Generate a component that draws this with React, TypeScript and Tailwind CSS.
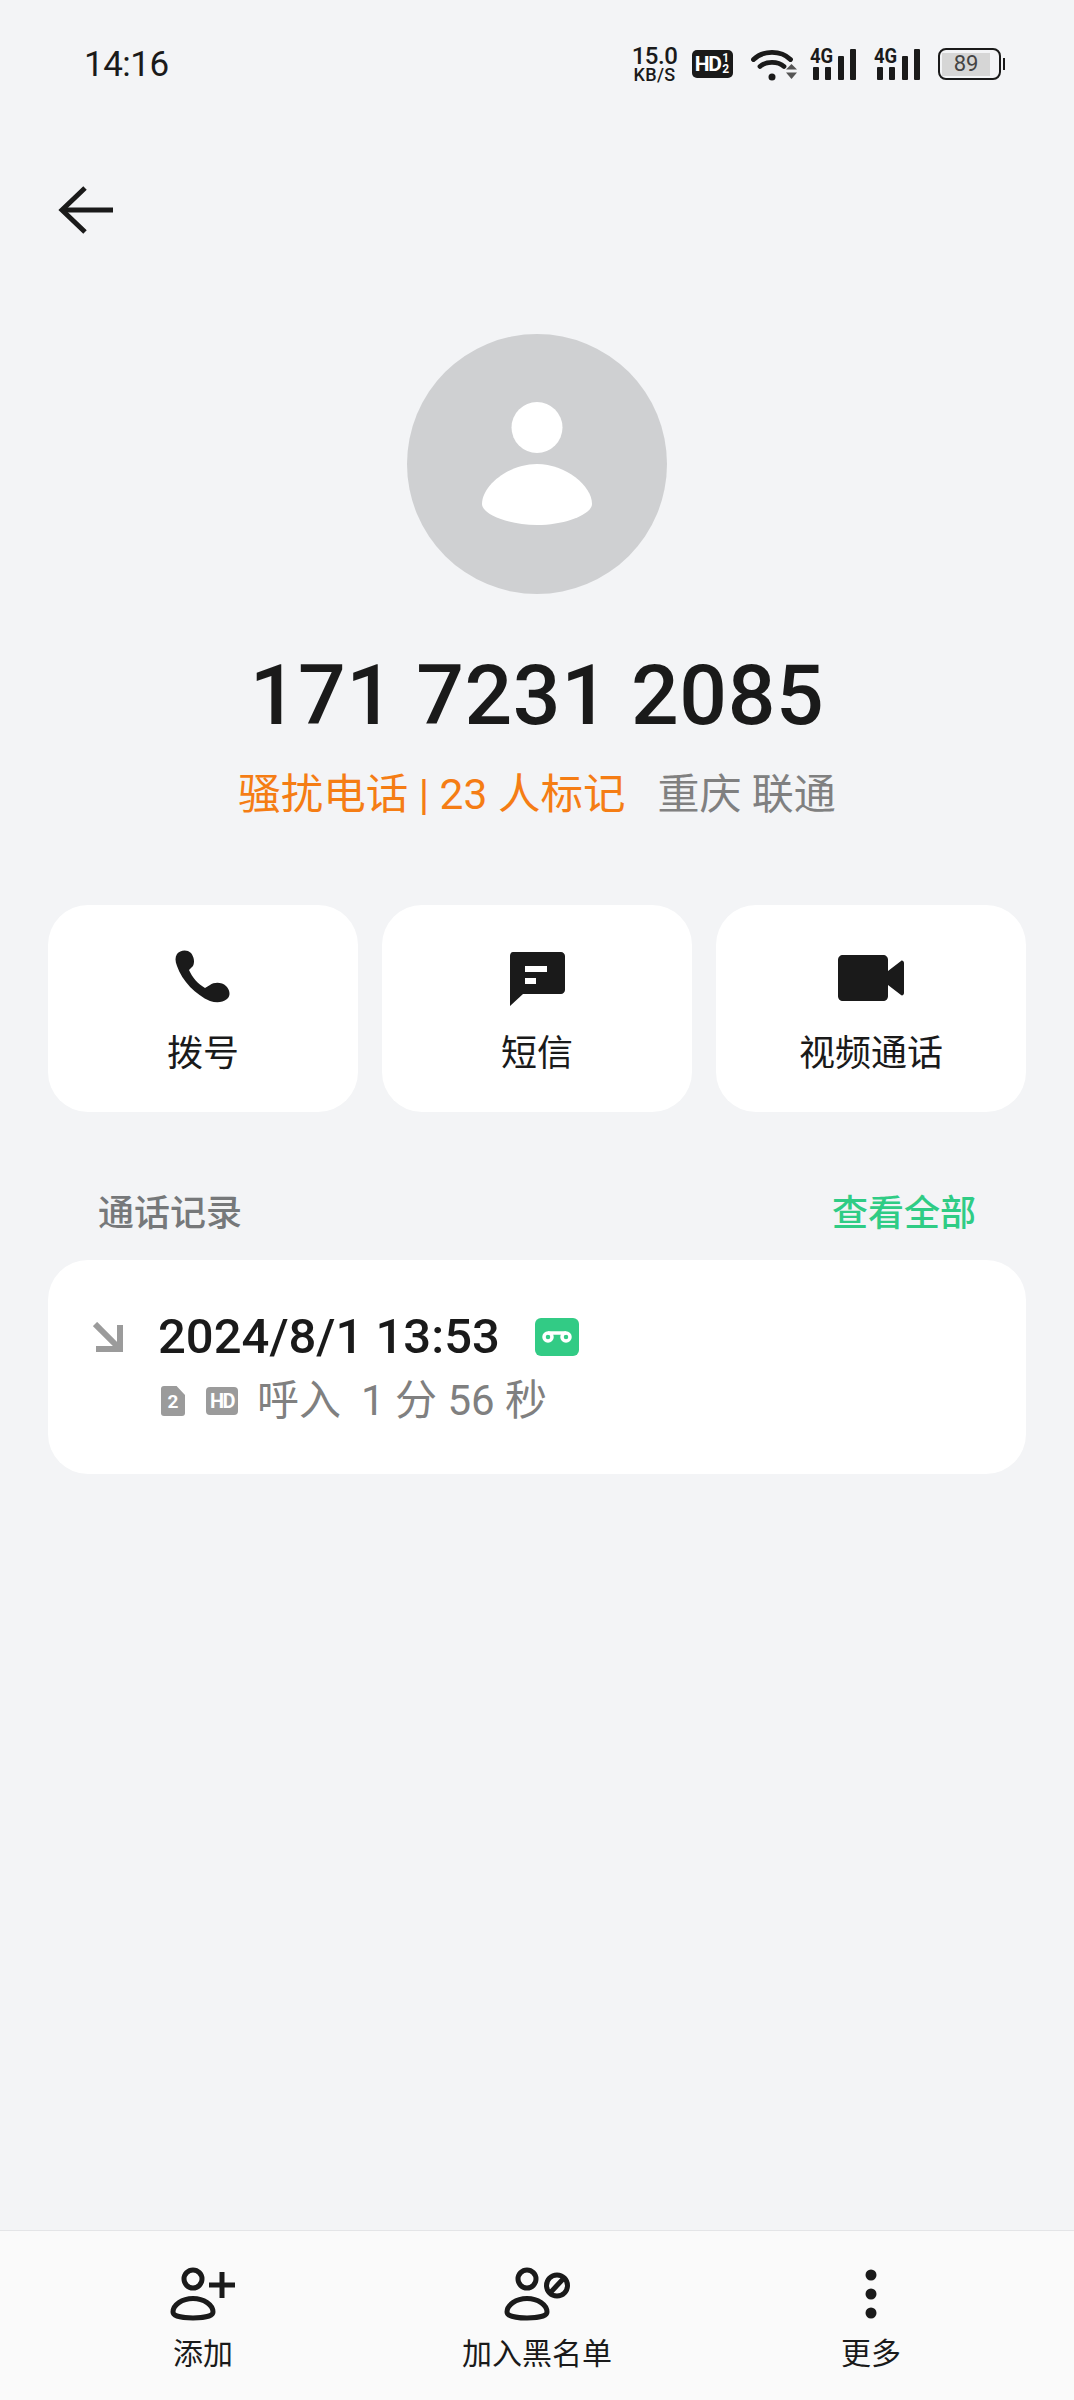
import type { ReactNode } from 'react'

const CJK = "font-['Roboto','Noto_Sans_CJK_SC',sans-serif]"

function SignalBars() {
  return (
    <div className="relative h-[32px] w-[47px]">
      <span className="absolute left-0 top-[-2px] origin-top-left scale-x-[0.88] text-[21px] font-bold leading-[20px] text-[#1a1a1a]">4G</span>
      <svg width="47" height="32" viewBox="0 0 47 32" fill="#1a1a1a">
        <rect x="3" y="19" width="6" height="13" rx="1" />
        <rect x="15" y="19" width="6" height="13" rx="1" />
        <rect x="28" y="8" width="6" height="24" rx="1" />
        <rect x="40" y="1" width="6" height="31" rx="1" />
      </svg>
    </div>
  )
}

function StatusBar() {
  return (
    <div className="flex h-[128px] items-center justify-between pl-[84px] pr-[69px] text-[#1a1a1a]">
      <span className="text-[35px] leading-none tracking-[-0.5px]">14:16</span>
      <div className="flex items-center">
        <div className="flex w-[46px] flex-col items-center">
          <span className="text-[24px] font-medium leading-[21px] tracking-[-0.5px]">15.0</span>
          <span className="text-[18px] font-medium leading-[15px] tracking-[0.3px]">KB/S</span>
        </div>
        <div className="ml-[14px] flex h-[28px] w-[41px] items-center justify-center rounded-[5px] bg-[#1a1a1a] text-white">
          <span className="text-[21px] font-bold leading-none tracking-[-1.5px]">HD</span>
          <div className="ml-[2px] flex flex-col items-center text-[12px] font-bold leading-[11px]">
            <span>1</span>
            <span>2</span>
          </div>
        </div>
        <svg className="ml-[18px]" width="46" height="33" viewBox="0 0 46 33" fill="none">
          <path d="M2.500 11.500C12 2 30 2 39.500 11.500" stroke="#1a1a1a" strokeWidth="4.800" strokeLinecap="round" />
          <path d="M9 18.500C15 13 27 13 33 18.500" stroke="#1a1a1a" strokeWidth="4.800" strokeLinecap="round" />
          <circle cx="21" cy="29" r="3.500" fill="#1a1a1a" />
          <path d="M35 21.500H46L40.500 16Z" fill="#555" />
          <path d="M35 24.500H46L40.500 31Z" fill="#555" />
        </svg>
        <div className="ml-[13px]"><SignalBars /></div>
        <div className="ml-[17px]"><SignalBars /></div>
        <div className="ml-[17px] flex items-center">
          <div className="flex h-[32px] w-[63px] items-center rounded-[8px] border-[2.5px] border-[#1a1a1a] p-[2.5px]">
            <div className="flex h-full w-[48px] items-center justify-center bg-[#d6d6d6]">
              <span className="text-[22px] leading-none text-[#444]">89</span>
            </div>
          </div>
          <div className="ml-[2px] h-[12px] w-[2.5px] bg-[#1a1a1a]" />
        </div>
      </div>
    </div>
  )
}

function ActionCard({ icon, label }: { icon: ReactNode, label: string }) {
  return (
    <div className="flex h-[207px] flex-1 flex-col items-center rounded-[40px] bg-white">
      <div className="mt-[44px] flex h-[58px] items-center justify-center">{icon}</div>
      <span className="mt-[20px] text-[36px] leading-[54px] text-[#1a1a1a]">{label}</span>
    </div>
  )
}

function BottomItem({ icon, label }: { icon: ReactNode, label: string }) {
  return (
    <div className="flex w-[334px] flex-col items-center">
      <div className="flex h-[56px] items-center justify-center">{icon}</div>
      <span className="mt-[9px] text-[30px] leading-[46px] text-[#1a1a1a]">{label}</span>
    </div>
  )
}

function PersonOutline() {
  return (
    <>
      <circle cx="23" cy="13" r="9" />
      <path d="M23 32.500C12 32.500 3 39 3 46C3 50 12 52 23 52C34 52 43 50 43 46C43 39 34 32.500 23 32.500Z" />
    </>
  )
}

export default function App() {
  return (
    <div className={`flex h-[2400px] w-[1074px] flex-col overflow-hidden bg-[#f3f4f6] ${CJK}`}>
      <StatusBar />

      <div className="pl-[58px] pt-[58px]">
        <svg width="55" height="48" viewBox="0 0 55 48" fill="none" stroke="#1a1a1a" strokeWidth="5">
          <path d="M55 24H5" />
          <path d="M27 2L4 24L27 46" />
        </svg>
      </div>

      <div className="mt-[100px] flex flex-col items-center">
        <div className="flex h-[260px] w-[260px] items-center justify-center rounded-full bg-[#cfd0d2]">
          <svg width="110" height="124" viewBox="0 0 110 124" fill="white">
            <circle cx="55" cy="25.500" r="25.500" />
            <path d="M55 62C26 62 0 84 0 102C0 112 26 123 55 123C84 123 110 112 110 102C110 84 84 62 55 62Z" />
          </svg>
        </div>
        <h1 className="mt-[52px] text-[84px] font-medium leading-[100px] tracking-[0.6px] text-[#1a1a1a]">171 7231 2085</h1>
        <div className="mt-[19px] flex items-center text-[42.5px] leading-[60px]">
          <span className="text-[#f57d14]">骚扰电话 | 23 人标记</span>
          <span className="ml-[32px] text-[42px] text-[#808080]">重庆 联通</span>
        </div>
      </div>

      <div className="mt-[80px] flex gap-[24px] px-[48px]">
        <ActionCard
          label="拨号"
          icon={
            <svg width="58" height="58" viewBox="0 0 58 58" fill="#1a1a1a">
              <path d="M3 5C6 1 13 0 17 4C20 8 21 13 19 17L15 21C18 28 24 35 31 39L36 36C40 33 48 33 52 37C56 41 57 47 53 50C48 54 42 54 36 52C22 46 8 32 3 17C1 12 1 8 3 5Z" />
            </svg>
          }
        />
        <ActionCard
          label="短信"
          icon={
            <svg className="mt-[2px]" width="56" height="54" viewBox="0 0 56 54" fill="#1a1a1a">
              <path fillRule="evenodd" d="M4 0H52C54 0 56 2 56 4V38C56 40 54 42 52 42H14L1 54V4C1 2 2 0 4 0ZM16 14V20H38V14ZM16 26V32H27V26Z" />
            </svg>
          }
        />
        <ActionCard
          label="视频通话"
          icon={
            <svg width="66" height="46" viewBox="0 0 66 46" fill="#1a1a1a">
              <path d="M5 0H45C48 0 50 2 50 5V41C50 44 48 46 45 46H5C2 46 0 44 0 41V5C0 2 2 0 5 0Z" />
              <path d="M50 16L63 6C64 5 66 6 66 8V38C66 40 64 41 63 40L50 30Z" />
            </svg>
          }
        />
      </div>

      <div className="mt-[75px] flex items-center justify-between px-[98px] text-[36px] font-medium leading-[54px]">
        <span className="text-[#76787a]">通话记录</span>
        <span className="text-[#2fcc85]">查看全部</span>
      </div>

      <div className="mx-[48px] mt-[19px] flex h-[214px] items-start rounded-[40px] bg-white pl-[45px] pt-[47px]">
        <svg className="mt-[15px]" width="30" height="30" viewBox="0 0 30 30" fill="none" stroke="#9b9b9b" strokeWidth="6">
          <path d="M2 2L26 26" />
          <path d="M3 27H27V3" />
        </svg>
        <div className="ml-[35px] flex flex-col">
          <div className="flex h-[60px] items-center">
            <span className="text-[49px] font-medium leading-[60px] text-[#1a1a1a]">2024/8/1 13:53</span>
            <div className="ml-[35px] flex h-[38px] w-[44px] items-center justify-center rounded-[6px] bg-[#32cb85]">
              <svg width="30" height="12" viewBox="0 0 30 12" fill="none" stroke="white" strokeWidth="3.500">
                <circle cx="6" cy="6" r="4" />
                <circle cx="24" cy="6" r="4" />
                <path d="M6 2H24" />
              </svg>
            </div>
          </div>
          <div className="mt-[4px] flex items-center">
            <div className="ml-[3px] flex h-[30px] w-[24px] items-center justify-center rounded-[3px] bg-[#9b9b9b] [clip-path:polygon(0_0,65%_0,100%_30%,100%_100%,0_100%)]">
              <span className="text-[19px] font-bold leading-none text-white">2</span>
            </div>
            <div className="ml-[21px] flex h-[28px] w-[32px] items-center justify-center rounded-[4px] bg-[#9b9b9b]">
              <span className="text-[20px] font-bold leading-none tracking-[-1.5px] text-white">HD</span>
            </div>
            <span className="ml-[19px] text-[42px] leading-[60px] text-[#808080]">呼入</span>
            <span className="ml-[20px] text-[42px] leading-[60px] text-[#808080]">1 分 56 秒</span>
          </div>
        </div>
      </div>

      <div className="mt-auto flex h-[170px] justify-center border-t-[1.5px] border-[#e4e5e7] bg-[#fafafa] pt-[35px]">
        <BottomItem
          label="添加"
          icon={
            <svg width="66" height="56" viewBox="0 0 66 56" fill="none" stroke="#1a1a1a" strokeWidth="5">
              <PersonOutline />
              <path d="M39 19H65M52 6V32" />
            </svg>
          }
        />
        <BottomItem
          label="加入黑名单"
          icon={
            <svg width="66" height="56" viewBox="0 0 66 56" fill="none" stroke="#1a1a1a" strokeWidth="5">
              <PersonOutline />
              <circle cx="53" cy="19.500" r="10.500" />
              <path d="M46 27L60 12" />
            </svg>
          }
        />
        <BottomItem
          label="更多"
          icon={
            <svg width="12" height="50" viewBox="0 0 12 50" fill="#1a1a1a">
              <circle cx="6" cy="6" r="5.500" />
              <circle cx="6" cy="25" r="5.500" />
              <circle cx="6" cy="44" r="5.500" />
            </svg>
          }
        />
      </div>
    </div>
  )
}
